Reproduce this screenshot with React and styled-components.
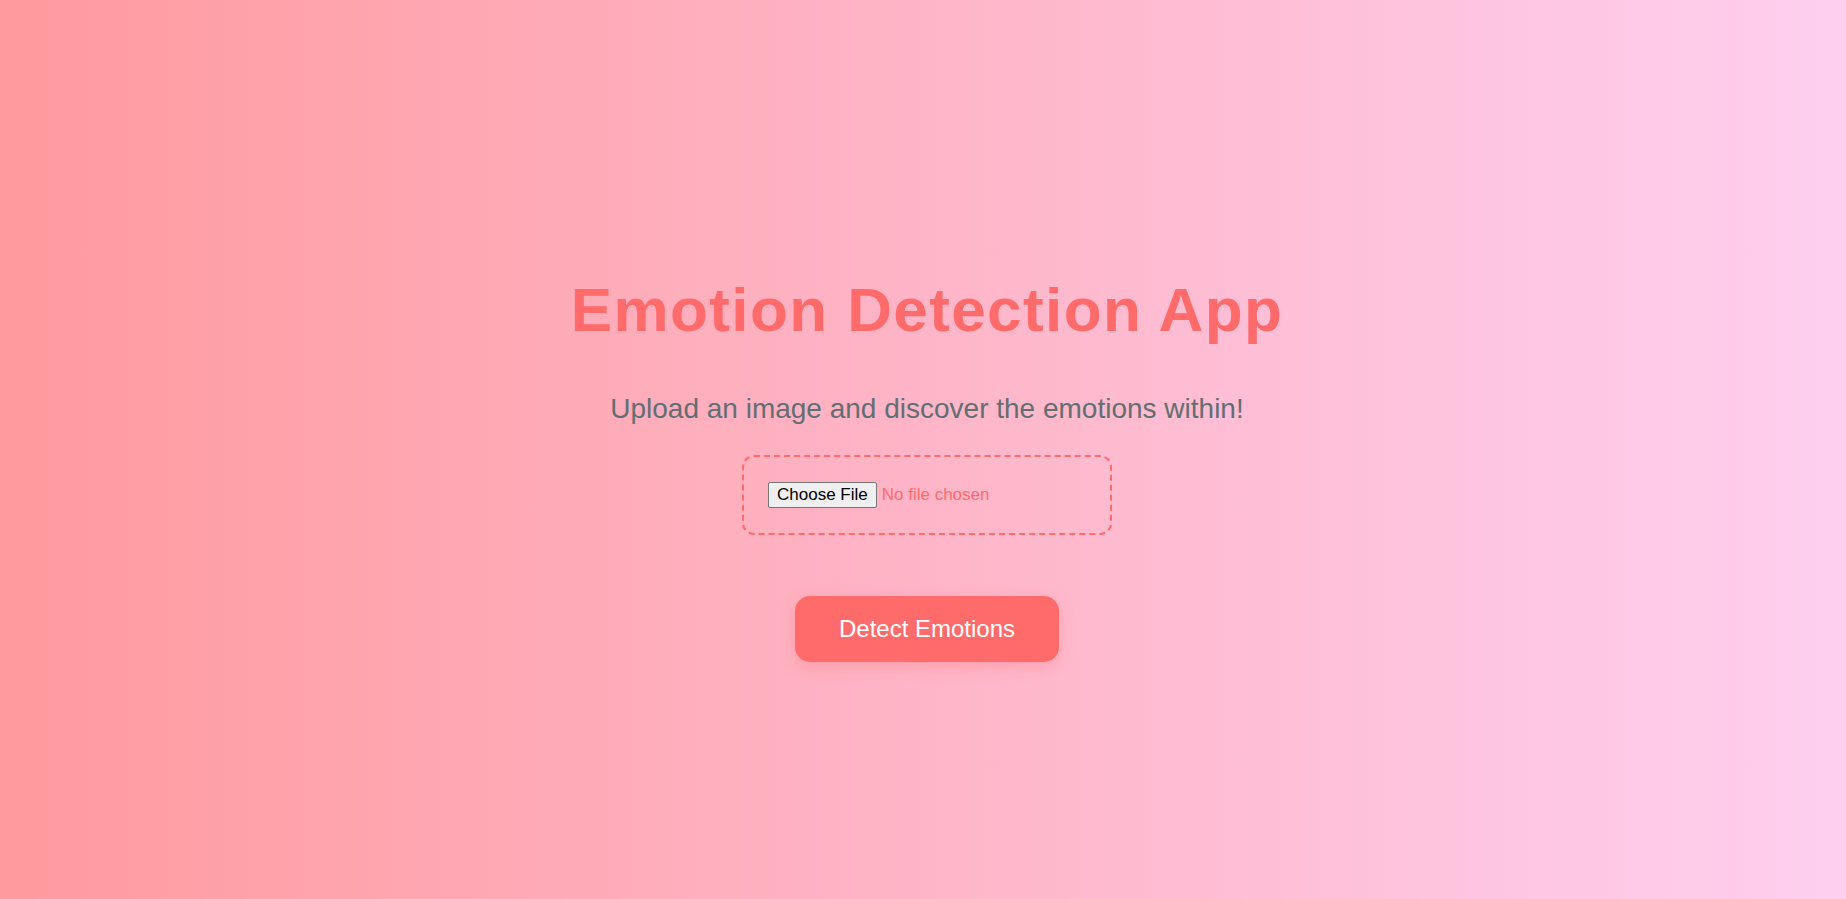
import styled, { createGlobalStyle } from 'styled-components'

const GlobalStyle = createGlobalStyle`
  html, body {
    margin: 0;
    padding: 0;
  }
  body {
    font-family: "Liberation Sans", Arial, sans-serif;
    background: linear-gradient(to right, #ff9a9e 0%, #fecfef 99%, #fecfef 100%);
    min-height: 100vh;
  }
`

const Page = styled.main`
  min-height: 100vh;
  box-sizing: border-box;
  padding: 36px 0 0 8px;
  display: flex;
  flex-direction: column;
  align-items: center;
  justify-content: center;
  text-align: center;
`

const Title = styled.h1`
  margin: 0;
  font-size: 62px;
  font-weight: 700;
  letter-spacing: 1.4px;
  color: #ff6b6b;
`

const Subtitle = styled.p`
  margin: 48px 0 30px;
  font-size: 28px;
  color: #636e72;
`

const DropZone = styled.label`
  width: 370px;
  box-sizing: border-box;
  padding: 25px 24px;
  border: 2px dashed #ff6b6b;
  border-radius: 12px;
  display: flex;
  align-items: center;
`

const FileInput = styled.input`
  font-family: "Liberation Sans", Arial, sans-serif;
  font-size: 17px;
  color: #ff6b6b;

  &::file-selector-button {
    font-family: "Liberation Sans", Arial, sans-serif;
    font-size: 17px;
    color: #000;
    background: #efefef;
    border: 1px solid #767676;
    border-radius: 2px;
    padding: 2px 8px;
    margin-right: 5px;
  }
`

const DetectButton = styled.button`
  margin-top: 61px;
  padding: 19px 44px;
  border: none;
  border-radius: 15px;
  background: #ff6b6b;
  color: #fff;
  font-family: "Liberation Sans", Arial, sans-serif;
  font-size: 24px;
  cursor: pointer;
  box-shadow: 0 5px 15px rgba(255, 107, 107, 0.3);
`

const App = () => {
  return (
    <>
      <GlobalStyle />
      <Page>
        <Title>Emotion Detection App</Title>
        <Subtitle>Upload an image and discover the emotions within!</Subtitle>
        <DropZone>
          <FileInput type="file" accept="image/*" />
        </DropZone>
        <DetectButton>Detect Emotions</DetectButton>
      </Page>
    </>
  )
}

export default App
